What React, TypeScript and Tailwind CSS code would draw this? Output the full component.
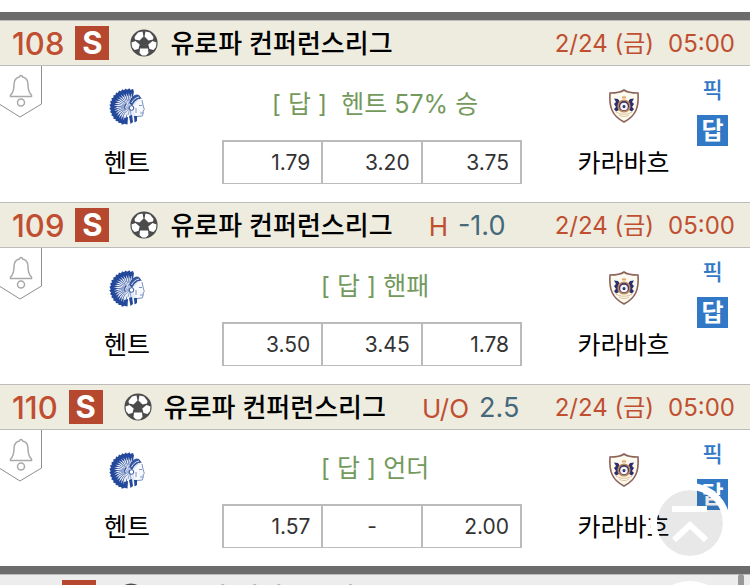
import clsx from 'clsx';

type Match = {
  no: number;
  label?: string;
  line?: string;
  answer: string;
  odds: string[];
};

const matches: Match[] = [
  { no: 108, answer: '[ 답 ]  헨트 57% 승', odds: ['1.79', '3.20', '3.75'] },
  { no: 109, label: 'H', line: '-1.0', answer: '[ 답 ] 핸패', odds: ['3.50', '3.45', '1.78'] },
  { no: 110, label: 'U/O', line: '2.5', answer: '[ 답 ] 언더', odds: ['1.57', '-', '2.00'] },
];

export default function App() {
  return (
    <main className="h-screen overflow-hidden bg-white pt-3 font-['Inter','Noto_Sans_CJK_KR',sans-serif] text-black">
      <div className="h-2 bg-[#6c6c6c]" />
      {matches.map((match) => (
        <section key={match.no}>
          <MatchHeader no={match.no} label={match.label} line={match.line} />
          <MatchBody match={match} />
        </section>
      ))}
      <div className="h-2 bg-[#6c6c6c]" />
      <div className="relative">
        <MatchHeader no={111} closed />
        <span className="absolute top-0 right-[6px] h-12 w-[6px] rounded-full bg-[#999999]" />
      </div>

      <button
        type="button"
        aria-label="맨 위로"
        className="fixed right-5 bottom-[22px] flex h-20 w-20 items-center justify-center rounded-full border-[7px] border-white bg-[#505050]/13 bg-clip-padding"
      >
        <ScrollIcon />
      </button>
      <button
        type="button"
        aria-label="맨 아래로"
        className="fixed right-5 -bottom-[76px] h-20 w-20 rounded-full border-[7px] border-white bg-[#505050]/13 bg-clip-padding"
      />
    </main>
  );
}

function MatchHeader({
  no,
  label,
  line,
  closed,
}: {
  no: number;
  label?: string;
  line?: string;
  closed?: boolean;
}) {
  return (
    <header
      className={clsx(
        'flex h-[46px] items-center border-y border-[#bdbdbd] pr-[15px] pl-3 whitespace-nowrap',
        closed ? 'bg-[#ededed]' : 'bg-[#eeecdf]',
      )}
    >
      <span className="pt-[2px] text-[31px] font-medium text-[#c04f32]">{no}</span>
      <span className="ml-[11px] flex h-[34px] w-[34px] items-center justify-center bg-[#b5482e] text-[31px] font-bold text-white">
        S
      </span>
      <BallIcon />
      <h2 className="ml-3 text-[26px] font-medium">유로파 컨퍼런스리그</h2>
      {label && <span className="ml-9 pt-[2px] text-[26px] text-[#c04f32]">{label}</span>}
      {line && <span className="ml-[10px] pt-[2px] text-[27px] text-[#45687b]">{line}</span>}
      {!closed && (
        <time className="ml-auto flex gap-[14px] pt-[2px] text-2xl text-[#c04f32]">
          <span>2/24 (금)</span>
          <span>05:00</span>
        </time>
      )}
    </header>
  );
}

function MatchBody({ match }: { match: Match }) {
  return (
    <div className="relative grid h-[136px] grid-cols-[222fr_300px_175fr_53px]">
      <button type="button" aria-label="알림" className="absolute top-0 left-0">
        <BellTag />
      </button>

      <div className="flex flex-col items-center pt-5 pl-8">
        <div className="flex h-10 items-center">
          <GentLogo />
        </div>
        <div className="mt-4 flex h-11 items-center text-[25px]">헨트</div>
      </div>

      <div className="pt-4">
        <p className="h-11 pl-[6px] text-center text-[25px] leading-[44px] whitespace-pre text-[#739a5c]">
          {match.answer}
        </p>
        <table className="mt-[14px] h-11 w-full table-fixed border-collapse border-2 border-b border-[#bbbbbb] text-[21px] text-[#333333]">
          <tbody>
            <tr>
              {match.odds.map((odd, idx) => (
                <td
                  key={idx}
                  className={clsx(
                    'border-x-2 border-[#bbbbbb] p-0',
                    odd === '-' ? 'text-center' : 'pr-[11px] text-right',
                  )}
                >
                  {odd}
                </td>
              ))}
            </tr>
          </tbody>
        </table>
      </div>

      <div className="flex flex-col items-center pt-5 pl-7">
        <div className="flex h-10 items-center">
          <QarabagLogo />
        </div>
        <div className="mt-4 flex h-11 items-center text-[25px]">카라바흐</div>
      </div>

      <div className="flex w-[31px] flex-col items-center gap-[9px] pt-2">
        <button type="button" className="h-8 text-[22px] leading-8 font-medium text-[#3179c6]">
          픽
        </button>
        <button
          type="button"
          className="h-[31px] w-[31px] bg-[#3179c6] text-2xl leading-[31px] font-bold text-white"
        >
          답
        </button>
      </div>
    </div>
  );
}

function BallIcon() {
  return (
    <svg className="ml-[21px] h-7 w-7 shrink-0" viewBox="0 0 28 28">
      <circle cx="14" cy="14" r="13.6" fill="#4b4b4b" />
      <g fill="#ffffff">
        <path d="M4.500 8 8 3.500 12.500 2.500 13.500 7.500 9.500 11.500 5 10.500Z" />
        <path d="M23.500 8 20 3.500 15.500 2.500 14.500 7.500 18.500 11.500 23 10.500Z" />
        <path d="M1.500 13.500 5.500 12 9.700 15.500 8.500 20 4.500 21 2 18Z" />
        <path d="M26.500 13.500 22.500 12 18.300 15.500 19.500 20 23.500 21 26 18Z" />
        <path d="M10 19.500 18 19.500 18.500 24 16 26.500 12 26.500 9.500 24Z" />
      </g>
    </svg>
  );
}

function BellTag() {
  return (
    <svg className="h-[52px] w-[42px]" viewBox="0 0 42 52" fill="none">
      <path d="M41.500 0V38L20 51 0 38.500" stroke="#8e8e8e" />
      <path
        d="M21 9.500c-1 0-1.400.7-1.600 1.500-3.900.8-5.400 3.800-5.400 7.500 0 5.500-.6 8-3.500 10.500v1.500h21V29c-2.900-2.500-3.500-5-3.500-10.500 0-3.700-1.500-6.700-5.400-7.500-.2-.8-.6-1.500-1.600-1.500Z"
        stroke="#a9a9a9"
        strokeWidth="1.5"
      />
      <circle cx="21" cy="36.500" r="3.500" stroke="#a9a9a9" strokeWidth="1.5" />
    </svg>
  );
}

const feathers = [-14, -3, 8, 19, 30, 41, 52, 63, 74, 85, 96, 107, 118, 129, 140, 151, 162];

function GentLogo() {
  return (
    <svg className="h-[37px] w-[37px]" viewBox="1 0 37 37">
      {feathers.map((deg) => (
        <g key={deg} transform={`rotate(${-deg} 20 19)`}>
          <path d="M19 16 17.700 7 17.800 2 20.500 0.300 22 2.500 22.300 7 21 16Z" fill="#24499b" />
          <path d="M19.200 15 18.700 8.500 20 5 21.300 8.500 21 15Z" fill="#eef2f9" />
        </g>
      ))}
      <path d="M19 13 28 12 35 13 36 24 33 29 26 30 17 26Z" fill="#e6ecf6" />
      <path
        d="M22 20 14 17M22 20 13 20M22 20 14 23M22 20 16 13M22 20 19 11M22 20 16 26M22 20 20 27M22 20 23 28"
        stroke="#7c94c6"
        strokeWidth="0.8"
      />
      <path d="M21 15C23 9 27 5 31 7l3 4c-4-1-7 2-10 7Z" fill="#35569f" />
      <path d="M23.500 15c1.500-3 4-5.500 7.500-6M26 16c1.500-2.500 3-4 6-4.500" stroke="#d8e2f3" fill="none" />
      <path d="M26 18 30 13 34 12 35 17 36.500 22 35 23 35 27 33 28.500 28 28 26 24Z" fill="#f7f9fc" />
      <path
        d="M34 12 35 17 36.300 21.500 35 23 35.300 25 34.300 28 29 28.500M31 17.500h3M32 25h3M28 20v5"
        stroke="#7089bf"
        strokeWidth="0.9"
        fill="none"
      />
      <circle cx="23.500" cy="20" r="2.300" fill="#ffffff" stroke="#35569f" />
      <path
        d="M21 28 24 27 25 34 22.500 36ZM26 28 29 28 29 33 26.500 34.500ZM16 30 20 29 19.500 36.500 17 36Z"
        fill="#24499b"
      />
    </svg>
  );
}

function QarabagLogo() {
  return (
    <svg className="h-[34px] w-8" viewBox="0 0 32 34">
      <path
        d="M16 1c4 3 9 3 14 3 1 14-2 23-14 29C4 27 1 18 2 4c5 0 10 0 14-3Z"
        fill="#fcfaf0"
        stroke="#8b6258"
        strokeWidth="1.6"
      />
      <path d="M14 7 15 8 16 6.500 17 8 18 7 18 9.500H14Z" fill="#e2a96c" />
      <path
        d="M6 9.500 10 10 12 13 10 16 11 21 8 22.500 6 20 8 18 6 15 8 13ZM26 9.500 22 10 20 13 22 16 21 21 24 22.500 26 20 24 18 26 15 24 13Z"
        fill="#2e2d6d"
      />
      <circle cx="16" cy="17" r="5.800" fill="#38376f" stroke="#c38b53" strokeWidth="1.6" />
      <circle cx="16" cy="17.500" r="3.800" fill="#f3f1f3" />
      <path d="M16 15.800 17.600 17 17 19H15L14.400 17Z" fill="#38376f" />
      <path d="M8 23c5 3 11 3 16 0M11 26c3 2 7 2 10 0" stroke="#dfc391" fill="none" />
    </svg>
  );
}

function ScrollIcon() {
  return (
    <svg className="h-10 w-10 shrink-0" viewBox="0 0 40 40" fill="none" stroke="#ffffff" strokeWidth="6">
      <path d="M2 6H37M4 37 20 22 36 37" />
    </svg>
  );
}
